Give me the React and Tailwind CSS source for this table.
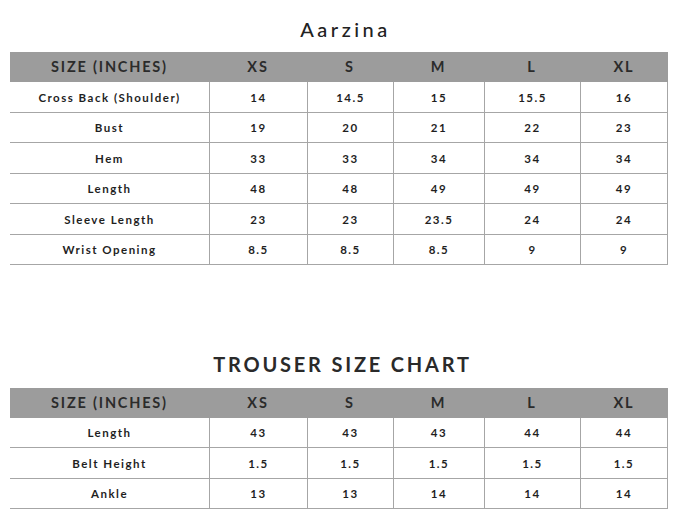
const cols = "grid grid-cols-[199px_98px_86px_91px_96px_88px]";
const sizes = ["XS", "S", "M", "L", "XL"];

const top = [
  ["Cross Back (Shoulder)", "14", "14.5", "15", "15.5", "16"],
  ["Bust", "19", "20", "21", "22", "23"],
  ["Hem", "33", "33", "34", "34", "34"],
  ["Length", "48", "48", "49", "49", "49"],
  ["Sleeve Length", "23", "23", "23.5", "24", "24"],
  ["Wrist Opening", "8.5", "8.5", "8.5", "9", "9"],
];

const trouser = [
  ["Length", "43", "43", "43", "44", "44"],
  ["Belt Height", "1.5", "1.5", "1.5", "1.5", "1.5"],
  ["Ankle", "13", "13", "14", "14", "14"],
];

function Table({ rows }) {
  return (
    <div className="ml-[10px] w-[658px]">
      <div className={`${cols} h-[30px] bg-[#9c9c9c] text-[14.5px] font-bold tracking-[1.8px] text-[#2b2b2b]`}>
        <div className="flex items-center justify-center">SIZE (INCHES)</div>
        {sizes.map((s) => (
          <div key={s} className="flex items-center justify-center">{s}</div>
        ))}
      </div>
      {rows.map((r, i) => (
        <div key={i} className={`${cols} h-[30.5px] text-[11.5px] font-bold tracking-[1.5px] text-[#1f1f1f]`}>
          {r.map((c, j) => (
            <div
              key={j}
              className={`flex items-center justify-center pt-[1px] border-b border-[#a6a6a6] ${j > 0 ? "border-l" : ""} ${j === 5 ? "border-r" : ""}`}
            >
              {c}
            </div>
          ))}
        </div>
      ))}
    </div>
  );
}

export default function App() {
  return (
    <div className="w-[679px] h-[512px] bg-white overflow-hidden" style={{ fontFamily: "Lato, 'Open Sans', sans-serif" }}>
      <div className="h-[52px] pt-[17px] pl-[12px] text-center text-[20px] leading-[24px] font-medium tracking-[3.5px] text-[#222]">
        Aarzina
      </div>
      <Table rows={top} />
      <div className="h-[122.5px] pt-[86.5px] pl-[6px] text-center text-[20px] leading-[25px] font-bold tracking-[2.8px] text-[#2a2a2a]">
        TROUSER SIZE CHART
      </div>
      <Table rows={trouser} />
    </div>
  );
}
